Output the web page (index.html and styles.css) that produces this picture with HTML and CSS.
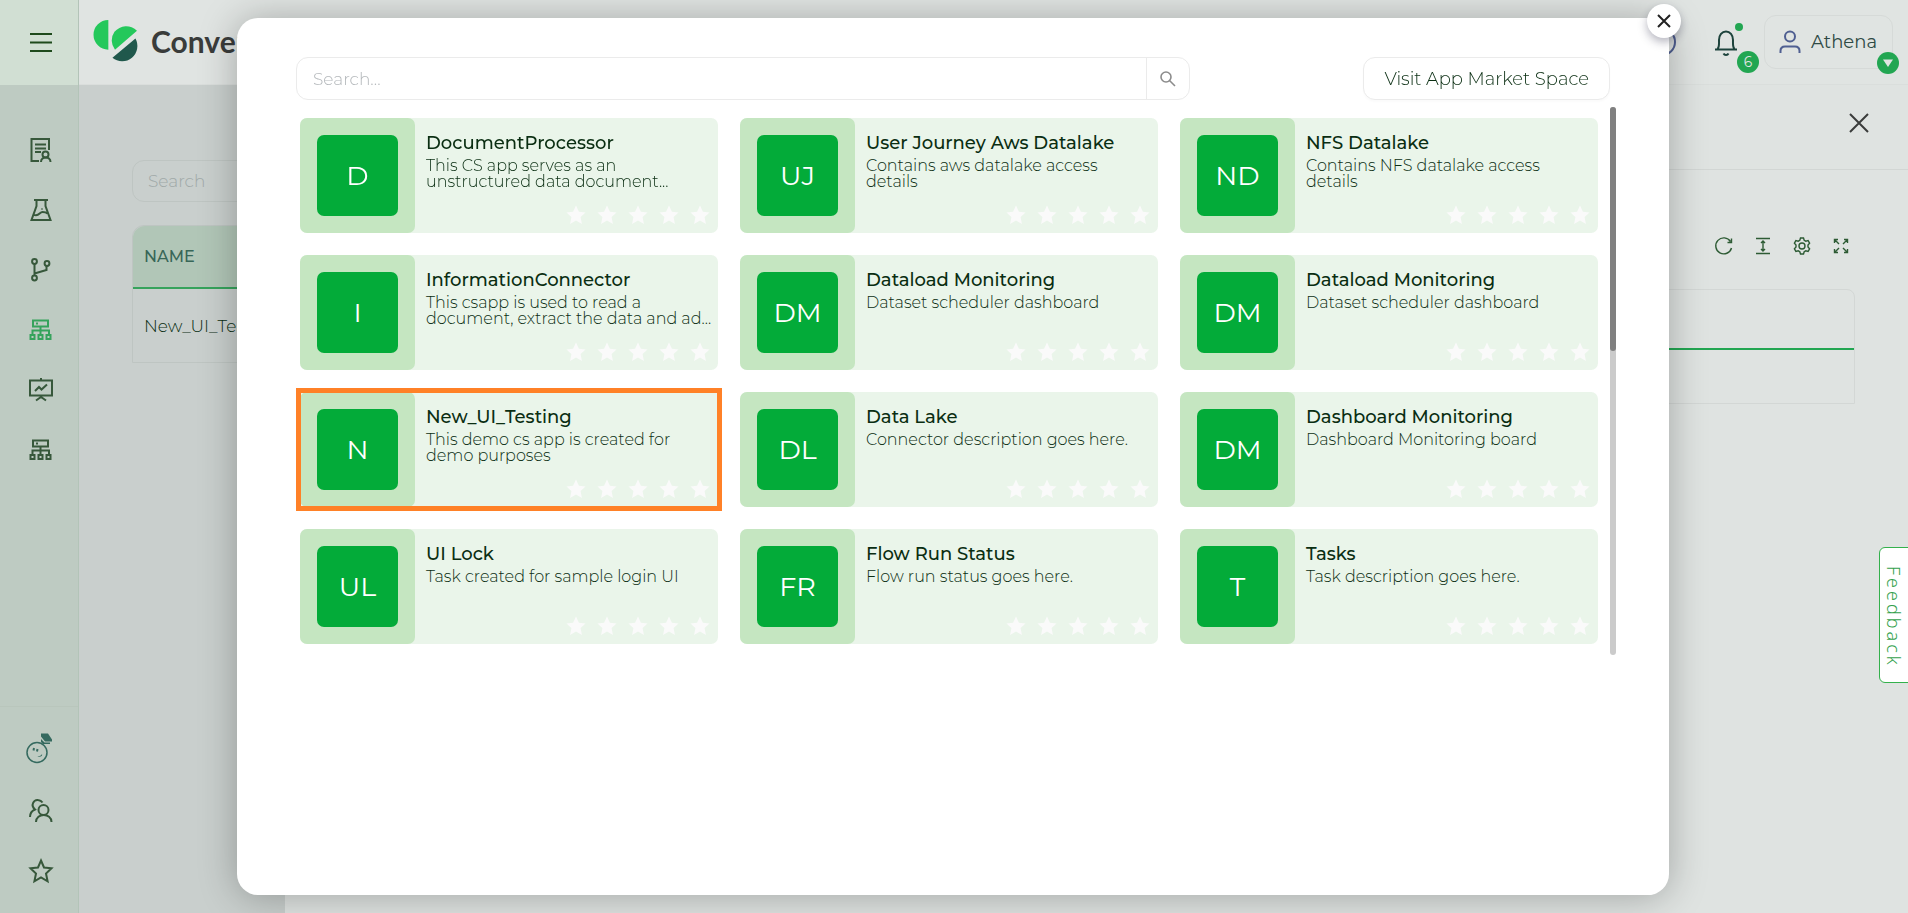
FILE: index.html
```html
<!DOCTYPE html>
<html lang="en">
<head>
<meta charset="utf-8">
<title>App Market</title>
<link rel="stylesheet" href="styles.css">
</head>
<body>
<svg class="sprite" aria-hidden="true">
  <symbol id="star-solid" viewBox="0 0 20 20"><path d="M10 .5l2.900 6.200 6.600.8-4.900 4.600 1.300 6.800L10 15.500l-5.900 3.400 1.300-6.800L.5 7.500l6.600-.8z"/></symbol>
  <symbol id="rating" viewBox="0 0 144 20"><use href="#star-solid" width="20" height="20"/><use href="#star-solid" x="31" width="20" height="20"/><use href="#star-solid" x="62" width="20" height="20"/><use href="#star-solid" x="93" width="20" height="20"/><use href="#star-solid" x="124" width="20" height="20"/></symbol>
  <symbol id="network" viewBox="0 0 24 24"><path d="M4 2.500h15v6H4zM11.500 8.500v8M3.500 16.500v-4h16.500v4M1.500 17h4v4h-4zM9.500 17h4v4h-4zM17.500 17h4v4h-4zM7 5.500h2"/></symbol>
</svg>

<div class="app">
  <aside class="sidebar">
    <button class="icon-btn menu" aria-label="Menu"><svg viewBox="0 0 24 24"><path d="M1 3h22M1 11.500h22M1 20h22"/></svg></button>
    <nav class="nav">
      <a href="#" aria-label="Reports"><svg viewBox="0 0 24 24"><path d="M10 23H2.500V1h17.500v11M6 6.500h11M6 10.500h11M6 14h6M12 24c0-6 9.500-6 9.500 0"/><circle cx="16.500" cy="16.500" r="3"/></svg></a>
      <a href="#" aria-label="Lab"><svg viewBox="0 0 24 24"><path d="M5 2h14M7.500 2v6L2.500 22h19L16.500 8V2M4.500 16.500c5 3 6-2.500 9-2.500 2 0 4 .5 5 1.500M12.500 11h1"/></svg></a>
      <a href="#" aria-label="Branches"><svg viewBox="0 0 24 24"><circle cx="5.500" cy="3.500" r="2.400"/><circle cx="18" cy="5.500" r="2.400"/><circle cx="5.500" cy="20" r="2.400"/><path d="M5.500 6v11.500M5.500 15.500L17.500 12V8"/></svg></a>
      <a href="#" class="active" aria-label="Apps"><svg><use href="#network"/></svg></a>
      <a href="#" aria-label="Dashboards"><svg viewBox="0 0 24 24"><path d="M1 2.500h22v15H1zM12 2.500V0M12 17.500v3M7 22.500l5-3.500 5 3.500M6 13l4-4 2.500 2.500L18 6.500"/></svg></a>
      <a href="#" aria-label="Services"><svg><use href="#network"/></svg></a>
    </nav>
    <nav class="nav nav-bottom">
      <a href="#" class="assistant" aria-label="Assistant"><svg viewBox="0 0 28 32"><circle cx="12" cy="20.500" r="10"/><path class="fill" d="M16 1.500h7l4 6v2h-7l-4-5zM16 7l3.500 3.500h5.500V12h-7l-2-2zM12.500 24c2 .5 4-.5 4.500-2 1 2-2.500 4-4.500 2z"/><path class="bold" d="M9 16l-.5 2.500M12.500 17l-.5 2.500"/></svg></a>
      <a href="#" aria-label="Users"><svg viewBox="0 0 24 24"><circle cx="14.500" cy="11" r="5"/><path d="M7 23c0-9.500 15.500-9.500 15.500 0M1 18c0-3.500 1.500-6 5-7.500C1 6 5 .5 9 1c2 .2 3.500 1 4.500 2.500"/></svg></a>
      <a href="#" aria-label="Favourites"><svg viewBox="0 0 24 24"><path d="M12 1.500l3 7 7.500.8-5.500 5.200 1.600 7.800L12 18.500l-6.600 3.800L7 14.500 1.500 9.300 9 8.500z"/></svg></a>
    </nav>
  </aside>

  <div class="main">
    <header class="topbar">
      <a href="#" class="brand"><svg viewBox="0 0 44 42" aria-hidden="true"><path fill="#24c85b" d="M15 0v29A14.500 14.500 0 0 1 15 0zM43 10.500L21.500 29A14.500 14.500 0 0 1 21 11.500 15 15 0 0 1 43 10.500z"/><path fill="#20584c" d="M41.500 18A15 15 0 0 1 19 37z"/></svg><span>Conver</span></a>
      <div class="top-actions">
        <button class="icon-btn help" aria-label="Help"><svg viewBox="0 0 28 28"><circle cx="14" cy="14" r="13"/></svg></button>
        <button class="icon-btn bell" aria-label="Notifications"><svg viewBox="0 0 24 26"><path d="M1 20.500h22M3.500 20c2-2 1.500-5 1.500-9 0-5 3-8.500 7-8.500s7 3.500 7 8.500c0 4-.5 7 1.500 9M9.500 24.500c1 2 4 2 5 0"/></svg><span class="dot"></span><span class="badge">6</span></button>
        <button class="user"><svg viewBox="0 0 22 24" aria-hidden="true"><circle cx="11" cy="6.500" r="5"/><path d="M1.500 23v-2c0-3 2-4.500 4.500-4.500h10c2.500 0 4.500 1.500 4.500 4.500v2"/></svg>Athena<span class="badge"><svg class="caret" viewBox="0 0 10 8" aria-hidden="true"><path d="M0 .5h10L5 8z"/></svg></span></button>
      </div>
    </header>

    <div class="workspace">
      <section class="listing">
        <input type="search" class="page-search" placeholder="Search" aria-label="Search">
        <table class="names">
          <thead><tr><th>NAME</th></tr></thead>
          <tbody><tr><td>New_UI_Testing</td></tr></tbody>
        </table>
      </section>
      <section class="drawer">
        <div class="drawer-head"><button class="icon-btn" aria-label="Close drawer"><svg viewBox="0 0 20 20"><path d="M1 1l18 18M19 1L1 19"/></svg></button></div>
        <div class="tools">
          <button class="icon-btn" aria-label="Refresh"><svg viewBox="0 0 18 18"><path d="M16.500 11A8 8 0 1 1 15.500 4.500M16.500 1.500v4h-4"/></svg></button>
          <button class="icon-btn" aria-label="Row height"><svg viewBox="0 0 18 18"><path d="M2 1.500h14M2 16.500h14M9 4v10M7 6l2-2 2 2M7 12l2 2 2-2"/></svg></button>
          <button class="icon-btn" aria-label="Settings"><svg viewBox="0 0 18 18"><circle cx="9" cy="9" r="3"/><path d="M7.500 1h3l.7 2.300 1.600.9 2.300-.6 1.500 2.600L15 8v2l1.600 1.800-1.500 2.600-2.300-.6-1.600.9-.7 2.300h-3l-.7-2.300-1.600-.9-2.300.6-1.500-2.600L3 10V8L1.400 6.200l1.500-2.600 2.300.6 1.600-.9z"/></svg></button>
          <button class="icon-btn" aria-label="Full screen"><svg viewBox="0 0 18 18"><path d="M2.500 6V2.500H6M3 3l4 4M12 2.500h3.500V6M15 3l-4 4M2.500 12v3.500H6M3 15l4-4M12 15.500h3.500V12M15 15l-4-4"/></svg></button>
        </div>
        <div class="grid-frame"><div class="grid-head"></div><div class="grid-row"></div></div>
      </section>
    </div>
  </div>
</div>

<button class="feedback">Feedback</button>

<div class="overlay">
  <div class="modal" role="dialog" aria-modal="true" aria-label="App market">
    <button class="close" aria-label="Close"><svg viewBox="0 0 14 14"><path d="M1 1l12 12M13 1L1 13"/></svg></button>
    <div class="modal-bar">
      <form class="search" role="search">
        <input type="text" placeholder="Search..." aria-label="Search apps">
        <button type="button" aria-label="Search"><svg viewBox="0 0 16 16"><circle cx="6" cy="6" r="5"/><path d="M9.500 9.500L15 15"/></svg></button>
      </form>
      <button class="visit">Visit App Market Space</button>
    </div>
    <div class="results">
      <div class="cards">
        <article class="card"><div class="thumb"><span>D</span></div><div class="info"><h3>DocumentProcessor</h3><p>This CS app serves as an unstructured data document...</p><svg class="stars"><use href="#rating"/></svg></div></article>
        <article class="card"><div class="thumb"><span>UJ</span></div><div class="info"><h3>User Journey Aws Datalake</h3><p>Contains aws datalake access details</p><svg class="stars"><use href="#rating"/></svg></div></article>
        <article class="card"><div class="thumb"><span>ND</span></div><div class="info"><h3>NFS Datalake</h3><p>Contains NFS datalake access details</p><svg class="stars"><use href="#rating"/></svg></div></article>
        <article class="card"><div class="thumb"><span>I</span></div><div class="info"><h3>InformationConnector</h3><p>This csapp is used to read a document, extract the data and ad...</p><svg class="stars"><use href="#rating"/></svg></div></article>
        <article class="card"><div class="thumb"><span>DM</span></div><div class="info"><h3>Dataload Monitoring</h3><p>Dataset scheduler dashboard</p><svg class="stars"><use href="#rating"/></svg></div></article>
        <article class="card"><div class="thumb"><span>DM</span></div><div class="info"><h3>Dataload Monitoring</h3><p>Dataset scheduler dashboard</p><svg class="stars"><use href="#rating"/></svg></div></article>
        <article class="card selected"><div class="thumb"><span>N</span></div><div class="info"><h3>New_UI_Testing</h3><p>This demo cs app is created for demo purposes</p><svg class="stars"><use href="#rating"/></svg></div></article>
        <article class="card"><div class="thumb"><span>DL</span></div><div class="info"><h3>Data Lake</h3><p>Connector description goes here.</p><svg class="stars"><use href="#rating"/></svg></div></article>
        <article class="card"><div class="thumb"><span>DM</span></div><div class="info"><h3>Dashboard Monitoring</h3><p>Dashboard Monitoring board</p><svg class="stars"><use href="#rating"/></svg></div></article>
        <article class="card"><div class="thumb"><span>UL</span></div><div class="info"><h3>UI Lock</h3><p>Task created for sample login UI</p><svg class="stars"><use href="#rating"/></svg></div></article>
        <article class="card"><div class="thumb"><span>FR</span></div><div class="info"><h3>Flow Run Status</h3><p>Flow run status goes here.</p><svg class="stars"><use href="#rating"/></svg></div></article>
        <article class="card"><div class="thumb"><span>T</span></div><div class="info"><h3>Tasks</h3><p>Task description goes here.</p><svg class="stars"><use href="#rating"/></svg></div></article>
      </div>
      <div class="scrollbar"><div class="scroll-thumb"></div></div>
    </div>
  </div>
</div>
</body>
</html>
```
FILE: styles.css
```css
* { box-sizing: border-box; }
body {
  margin: 0;
  height: 100vh;
  overflow: hidden;
  font-family: Montserrat, Inter, "Liberation Sans", sans-serif;
  color: #0a2e12;
  background: #dfe3e1;
}
button, input { font: inherit; color: inherit; }
button { cursor: pointer; }
svg { display: block; fill: none; stroke: currentColor; stroke-width: 2; overflow: visible; }
.sprite { position: absolute; width: 0; height: 0; }
.icon-btn { border: 0; padding: 0; background: none; }

.app { display: flex; height: 100%; }
.sidebar {
  display: flex;
  flex-direction: column;
  flex: 0 0 79px;
  background: #becbc2;
  border-right: 1px solid #b3c4b8;
}
.menu { height: 85px; display: grid; place-items: center; padding-left: 4px; background: #d1dfd3; color: #1e4a1c; }
.menu svg { width: 24px; height: 24px; }
.nav { padding: 35px 0 0 4px; }
.nav a { display: grid; place-items: center; height: 60px; color: #37583b; }
.nav a.active { color: #36a35c; }
.nav svg { width: 24px; height: 24px; stroke-width: 2; }
.nav-bottom { margin-top: auto; padding: 14px 0 12px 4px; border-top: 1px solid #b9c6bc; }
.nav a.assistant { color: #356a5f; padding: 0 4px 6px 0; }
.nav .assistant svg { width: 28px; height: 32px; stroke-width: 1.500; }
.nav .bold { stroke-width: 2; }
.fill { fill: currentColor; stroke: none; }

.main { display: flex; flex-direction: column; flex: 1; min-width: 0; }
.topbar {
  display: flex;
  justify-content: space-between;
  height: 85px;
  padding: 15px 15px 0 14px;
  background: #e0e4e2;
  border-bottom: 1px solid #dadedc;
}
.brand {
  display: flex;
  gap: 13px;
  height: 52px;
  align-items: center;
  font: 700 30px Lato, sans-serif;
  color: #3a3c3b;
  text-decoration: none;
}
.brand svg { width: 45px; height: 43px; stroke: none; }
.top-actions { display: flex; align-items: center; height: 54px; }
.help { color: #4f5f91; }
.help svg { width: 28px; height: 28px; }
.bell { position: relative; margin: 0 26px 0 38px; color: #1d433c; }
.bell svg { width: 24px; height: 26px; }
.dot { position: absolute; top: -6px; right: -5px; width: 8px; height: 8px; border-radius: 50%; background: #22a652; }
.badge {
  position: absolute;
  right: -21px;
  bottom: -18px;
  display: grid;
  place-items: center;
  width: 22px;
  height: 22px;
  border-radius: 50%;
  background: #22a652;
  color: #e0e4e2;
  font-size: 14px;
}
.user {
  position: relative;
  display: flex;
  align-items: center;
  gap: 10px;
  height: 54px;
  padding: 0 15px 0 14px;
  border: 1px solid #d6dad8;
  border-radius: 12px;
  background: none;
  font-size: 18px;
  color: #2f4a45;
}
.user > svg { width: 22px; height: 24px; color: #4f5f91; }
.user .badge { right: -7px; bottom: -6px; }
.user .caret { width: 10px; height: 8px; fill: #e0e4e2; stroke: none; }

.workspace { display: flex; flex: 1; min-height: 0; }
.listing { flex: 0 0 206px; overflow: hidden; padding: 75px 0 0 53px; background: #c9cfcd; }
.page-search {
  display: block;
  width: 320px;
  height: 42px;
  padding: 0 15px;
  border: 1px solid #bec5c2;
  border-radius: 12px;
  background: none;
  font-size: 17px;
  font-weight: 300;
}
.page-search::placeholder { color: #a0a9a8; }
.names { width: 320px; margin-top: 23px; border-collapse: separate; border-spacing: 0; border: 1px solid #bec5c2; border-radius: 12px 12px 0 0; }
.names th { height: 63px; padding: 0 11px; text-align: left; font-size: 16px; font-weight: 500; color: #386658; background: #b1c6b7; border-bottom: 2px solid #36a35c; border-radius: 12px 0 0 0; }
.names td { height: 73px; padding: 0 11px; font-size: 17px; font-weight: 300; }

.drawer { flex: 1; background: #dfe3e1; }
.drawer-head { display: flex; justify-content: flex-end; align-items: center; height: 85px; padding: 0 39px 8px 0; border-bottom: 1px solid #d2d6d4; color: #3a3c3b; }
.drawer-head svg { width: 20px; height: 20px; }
.tools { display: flex; justify-content: flex-end; gap: 21px; padding: 67px 58px 0 0; color: #2d5b34; }
.tools svg { width: 18px; height: 18px; stroke-width: 1.400; }
.grid-frame { margin: 34px 53px 0 0; border: 1px solid #d3d7d5; border-radius: 0 8px 0 0; }
.grid-head { height: 60px; border-bottom: 2px solid #22a652; }
.grid-row { height: 53px; }

.feedback {
  position: absolute;
  right: -1px;
  top: 547px;
  width: 30px;
  height: 136px;
  padding: 4px 0 0;
  border: 1px solid #34b14c;
  border-radius: 6px 0 0 6px;
  background: #fff;
  color: #34a14c;
  writing-mode: vertical-rl;
  line-height: 22px;
  font: 300 18px "Noto Sans", sans-serif;
  letter-spacing: 3px;
}

.overlay { position: fixed; inset: 0; padding: 18px 239px 18px 237px; pointer-events: none; }
.modal {
  position: relative;
  height: 100%;
  padding: 39px 59px 0;
  border-radius: 21px;
  background: #fff;
  box-shadow: 0 2px 38px rgba(0, 0, 0, .28);
  pointer-events: auto;
}
.close {
  position: absolute;
  top: -14px;
  right: -12px;
  display: grid;
  place-items: center;
  width: 34px;
  height: 34px;
  border: 0;
  padding: 0;
  border-radius: 50%;
  background: #fff;
  color: #222;
  box-shadow: 0 4px 10px rgba(40, 40, 70, .35);
}
.close svg { width: 14px; height: 14px; stroke-width: 2; }
.modal-bar { display: flex; justify-content: space-between; }
.search { display: flex; width: 68%; height: 43px; margin: 0; border: 1px solid #ebebeb; border-radius: 12px; }
.search input { flex: 1; min-width: 0; padding: 0 16px; border: 0; background: none; font-size: 17px; font-weight: 300; }
.search input::placeholder { color: #b4b8bb; }
.search button { display: grid; place-items: center; width: 43px; border: 0; border-left: 1px solid #ebebeb; padding: 0; background: none; color: #8c8c8c; }
.search svg { width: 16px; height: 16px; stroke-width: 1.600; }
.visit { height: 43px; padding: 0 20px; border: 1px solid #ebebeb; border-radius: 12px; background: #fff; font-size: 18px; font-weight: 300; box-shadow: 0 2px 2px rgba(0, 0, 0, .02); }

.results { display: flex; gap: 12px; margin: 7px -6px 0 4px; }
.cards { flex: 1; display: grid; grid-template-columns: repeat(3, 1fr); gap: 22px; padding: 11px 0; }
.card { display: flex; height: 115px; border-radius: 7px; background: #eaf5ea; }
.card.selected { outline: 5px solid #ff8127; outline-offset: -1px; border-radius: 0; }
.thumb { display: grid; place-items: center; flex: 0 0 115px; border-radius: 7px; background: #c5e6c1; }
.thumb span { display: grid; place-items: center; width: 81px; height: 81px; border-radius: 7px; background: #03ab39; color: #fff; font-size: 27px; }
.info { display: flex; flex-direction: column; flex: 1; min-width: 0; padding: 15px 5px 8px 11px; }
.info h3 { margin: 0; font-size: 18px; font-weight: 500; line-height: 20px; }
.info p { margin: 5px 0 0; font-size: 16px; font-weight: 300; line-height: 16px; }
.stars { width: 144px; height: 20px; margin: auto 3px 0 auto; fill: #fafafa; stroke: none; }
.scrollbar { width: 6px; border-radius: 3px; background: #cbcbcb; }
.scroll-thumb { height: 244px; border-radius: 3px; background: #808080; }
```
